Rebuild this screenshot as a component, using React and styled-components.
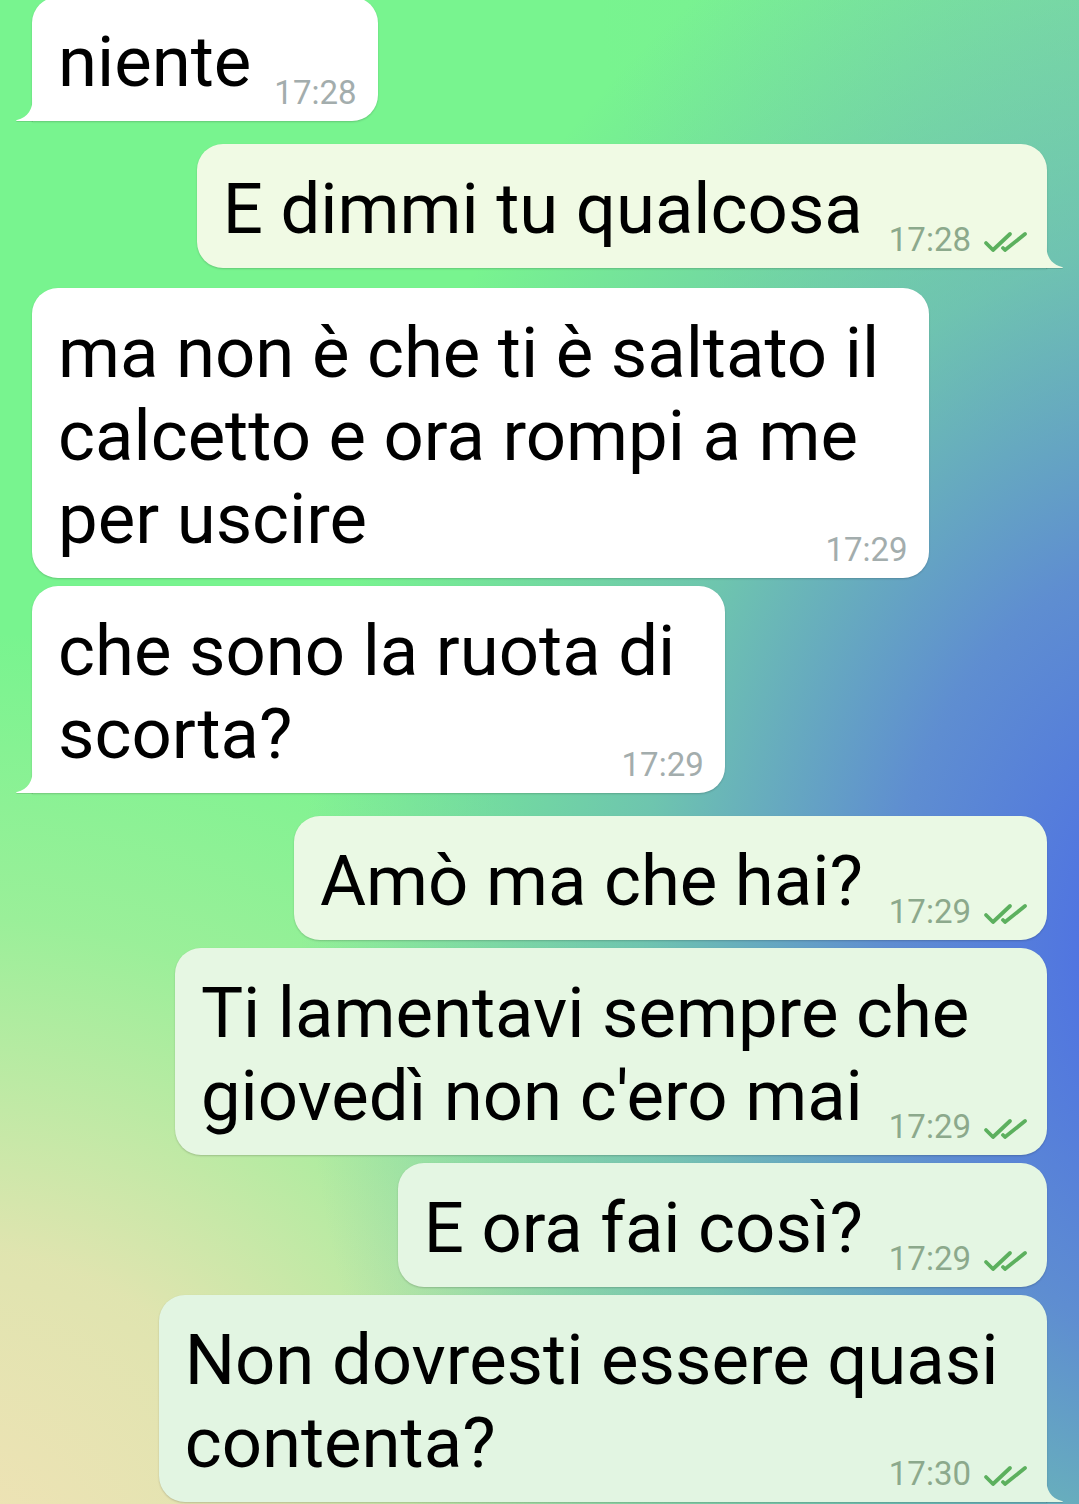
import React from "react";
import styled, { createGlobalStyle } from "styled-components";

const GlobalStyle = createGlobalStyle`
  html, body {
    margin: 0;
    padding: 0;
  }
  body {
    font-family: Roboto, "Noto Sans", "Liberation Sans", sans-serif;
  }
`;

const messages = [
  { id: 1, side: "in", lines: ["niente"], time: "17:28", tail: true },
  { id: 2, side: "out", lines: ["E dimmi tu qualcosa"], time: "17:28", tail: true, tint: "#f0fae4", gap: 23 },
  { id: 3, side: "in", lines: ["ma non è che ti è saltato il", "calcetto e ora rompi a me", "per uscire"], time: "17:29", gap: 20 },
  { id: 4, side: "in", lines: ["che sono la ruota di", "scorta?"], time: "17:29", tail: true, gap: 8 },
  { id: 5, side: "out", lines: ["Amò ma che hai?"], time: "17:29", tint: "#eaf9e4", gap: 23 },
  { id: 6, side: "out", lines: ["Ti lamentavi sempre che", "giovedì non c'ero mai"], time: "17:29", tint: "#e6f7e3", gap: 8 },
  { id: 7, side: "out", lines: ["E ora fai così?"], time: "17:29", tint: "#e4f6e3", gap: 8 },
  { id: 8, side: "out", lines: ["Non dovresti essere quasi", "contenta?"], time: "17:30", tail: true, tint: "#e2f5e2", gap: 8 },
];

const Checks = () => (
  <CheckIcon viewBox="0 0 46 22" width="46" height="22">
    <path d="M3 12 L10 19 L27 3" />
    <path d="M20 17 L22 19 L42 3" />
  </CheckIcon>
);

const Tail = ({ side, color }) => (
  <TailShape side={side} viewBox="0 0 18 26" width="18" height="26">
    {side === "in" ? (
      <path d="M18 0 C18 15 13 22 2 25 Q0 26 2 26 L18 26 Z" fill={color} />
    ) : (
      <path d="M0 0 C0 15 5 22 16 25 Q18 26 16 26 L0 26 Z" fill={color} />
    )}
  </TailShape>
);

export default function App() {
  return (
    <>
      <GlobalStyle />
      <Page>
        <List>
          {messages.map((m) => {
            const bg = m.side === "in" ? "#ffffff" : m.tint;
            const head = m.lines.slice(0, -1);
            const last = m.lines[m.lines.length - 1];
            return (
              <Row key={m.id} side={m.side} gap={m.gap || 0}>
                <Bubble side={m.side} tail={m.tail} bg={bg}>
                  {head.map((l, i) => (
                    <Line key={i} wrapped>
                      {l + " "}
                    </Line>
                  ))}
                  <LastLine>
                    <Line>{last}</Line>
                    <Meta side={m.side}>
                      <Time side={m.side}>{m.time}</Time>
                      {m.side === "out" && <Checks />}
                    </Meta>
                  </LastLine>
                  {m.tail && <Tail side={m.side} color={bg} />}
                </Bubble>
              </Row>
            );
          })}
        </List>
      </Page>
    </>
  );
}

const Page = styled.div`
  width: 1079px;
  height: 1504px;
  overflow: hidden;
  background:
    radial-gradient(ellipse 900px 1150px at 1200px 950px, rgba(72, 102, 234, 1) 0%, rgba(90, 124, 220, 0.85) 35%, rgba(100, 150, 206, 0.5) 62%, rgba(100, 175, 190, 0) 100%),
    radial-gradient(ellipse 1000px 950px at -60px 1580px, rgba(242, 226, 182, 1) 0%, rgba(238, 226, 180, 0.88) 35%, rgba(205, 232, 168, 0.4) 70%, rgba(190, 232, 165, 0) 100%),
    radial-gradient(ellipse 500px 450px at 1100px 0px, rgba(125, 232, 155, 1) 0%, rgba(125, 232, 155, 0) 100%),
    #78f48f;
`;

const List = styled.div`
  display: flex;
  flex-direction: column;
  margin-top: -3px;
`;

const Row = styled.div`
  display: flex;
  justify-content: ${(p) => (p.side === "in" ? "flex-start" : "flex-end")};
  padding: 0 32px;
  margin-top: ${(p) => p.gap}px;
`;

const Bubble = styled.div`
  position: relative;
  padding: 23px ${(p) => (p.side === "in" ? 21 : 20)}px 18px ${(p) => (p.side === "in" ? 26 : 26)}px;
  background: ${(p) => p.bg};
  border-radius: 26px;
  ${(p) => p.tail && p.side === "in" && "border-bottom-left-radius: 0;"}
  ${(p) => p.tail && p.side === "out" && "border-bottom-right-radius: 0;"}
  box-shadow: 0 1px 2px rgba(0, 0, 0, 0.18);
`;

const Line = styled.div`
  font-size: 70.7px;
  line-height: 83px;
  color: #000;
  white-space: pre;
  padding-right: ${(p) => (p.wrapped ? 11 : 0)}px;
`;

const LastLine = styled.div`
  display: flex;
  align-items: flex-end;
`;

const Meta = styled.div`
  display: flex;
  align-items: center;
  height: 32px;
  margin-left: auto;
  padding-left: ${(p) => (p.side === "in" ? 23 : 26)}px;
  margin-bottom: -6px;
`;

const Time = styled.span`
  font-size: 33px;
  line-height: 32px;
  color: ${(p) => (p.side === "in" ? "#a3adad" : "#8ca98c")};
`;

const CheckIcon = styled.svg`
  margin-left: 12px;
  margin-top: 4px;
  margin-right: -2px;
  fill: none;
  stroke: #5cb05e;
  stroke-width: 3.8;
  stroke-linecap: round;
  stroke-linejoin: round;
`;

const TailShape = styled.svg`
  position: absolute;
  bottom: 0;
  ${(p) => (p.side === "in" ? "left: -17px;" : "right: -17px;")}
  filter: drop-shadow(0 1px 0.5px rgba(0, 0, 0, 0.12));
`;
